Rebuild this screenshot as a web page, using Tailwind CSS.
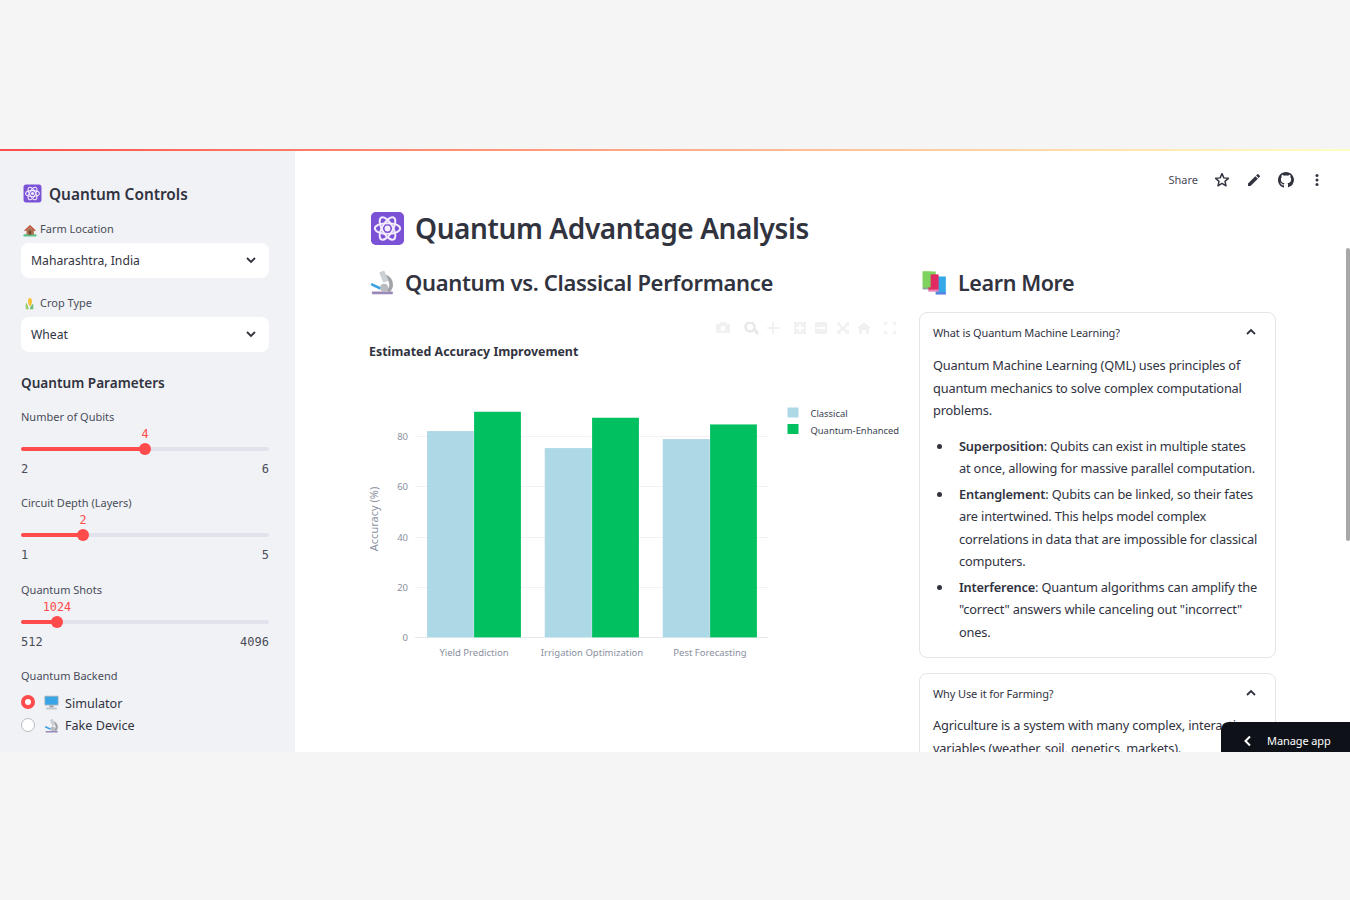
<!DOCTYPE html>
<html lang="en">
<head>
<meta charset="UTF-8">
<title>Quantum Advantage Analysis</title>
<script src="https://cdn.jsdelivr.net/npm/@tailwindcss/browser@4"></script>
</head>
<body class="bg-[#f5f5f5] font-['Noto_Sans',sans-serif] text-[#31333f] overflow-hidden">
<svg class="absolute w-0 h-0">
  <symbol id="atom" viewBox="0 0 36 36">
    <rect x="1" y="1" width="34" height="34" rx="5" fill="#7b52d6"/>
    <g fill="none" stroke="#f3edff" stroke-width="2">
      <ellipse cx="18" cy="18" rx="13" ry="5.5"/>
      <ellipse cx="18" cy="18" rx="13" ry="5.5" transform="rotate(60 18 18)"/>
      <ellipse cx="18" cy="18" rx="13" ry="5.5" transform="rotate(120 18 18)"/>
    </g>
    <circle cx="18" cy="18" r="3" fill="#f3edff"/>
  </symbol>
  <symbol id="microscope" viewBox="0 0 36 36">
    <rect x="4" y="31" width="29" height="4" rx="1" fill="#9a88b8"/>
    <path d="M22 10a12 12 0 0 1 4 21" fill="none" stroke="#a0a3a8" stroke-width="5"/>
    <path d="M14 5l7-3 6 14-7 3z" fill="#ccd0d4"/>
    <path d="M3 21l13 6" stroke="#3aa2e6" stroke-width="3.500"/>
    <circle cx="21" cy="26" r="5.500" fill="#b8bbc0"/>
  </symbol>
  <symbol id="books" viewBox="0 0 36 36">
    <rect x="1" y="2" width="18" height="24" fill="#7ed35e"/>
    <rect x="1" y="24" width="18" height="3" fill="#8fa6a0"/>
    <rect x="19" y="9" width="14" height="24" fill="#35a8e8"/>
    <rect x="19" y="31" width="14" height="3" fill="#5b7fe0"/>
    <rect x="9" y="6" width="14" height="23" fill="#e22a62"/>
    <rect x="9" y="27" width="14" height="3" fill="#e884b6"/>
    <rect x="1" y="2" width="11" height="22" fill="#7ed35e"/>
  </symbol>
  <symbol id="house" viewBox="0 0 36 36">
    <rect x="1" y="29" width="34" height="6" rx="2" fill="#5cc48a"/>
    <rect x="9" y="16" width="19" height="14" fill="#a9714f"/>
    <path d="M3 19L18 5l15 14-2 2L18 10 5 21z" fill="#c2452f"/>
    <path d="M18 10L7 20h22z" fill="#a9714f"/>
    <rect x="15" y="20" width="6" height="10" fill="#6d4632"/>
  </symbol>
  <symbol id="corn" viewBox="0 0 36 36">
    <path d="M16 4c6-3 9 2 9 8s-2 12-5 14c-4-3-7-8-6-14 0-3 0-6 2-8z" fill="#f5c33b"/>
    <path d="M8 34c-1-9-1-14 1-18 3 4 6 10 7 18z" fill="#9ccb6b"/>
    <path d="M28 34c1-7 1-11-1-15-4 4-7 9-8 15z" fill="#6cbf7b"/>
  </symbol>
  <symbol id="desktop" viewBox="0 0 36 36">
    <rect x="1" y="2" width="34" height="23" rx="2" fill="#a9b4bb"/>
    <rect x="3" y="4" width="30" height="19" fill="#38a6e6"/>
    <rect x="13" y="25" width="10" height="5" fill="#9aa3ab"/>
    <rect x="5" y="30" width="26" height="5" rx="1" fill="#c3c8cd"/>
  </symbol>
</svg>

<div class="h-[149px]"></div>
<div class="relative flex h-[603px] overflow-hidden bg-white">
  <div class="absolute top-0 left-0 right-0 h-[1.500px] bg-gradient-to-r from-[#ff4b4b] to-[#ffffc2]"></div>

  <!-- sidebar -->
  <aside class="w-[295px] shrink-0 bg-[#f0f2f6] pl-[21px] pr-[26px] pt-[34px]">
    <h2 class="flex items-center h-[21px] pt-[2px] text-[15.400px] font-semibold whitespace-nowrap">
      <svg class="w-[19px] h-[19px] mt-[-3px] ml-[2px] mr-[7px]"><use href="#atom"/></svg>Quantum Controls
    </h2>
    <div class="mt-[16px] h-[17px] pt-[2px] flex items-center text-[11px] text-[#4a4c58] whitespace-nowrap">
      <svg class="w-[14px] h-[14px] ml-[2px] mr-[3px]"><use href="#house"/></svg>Farm Location
    </div>
    <div class="mt-[6px] h-[35px] bg-white rounded-lg pl-[10px] pr-[12px] flex items-center justify-between text-[12.200px]">
      <span class="pt-[2px]">Maharashtra, India</span>
      <svg class="w-[12px] h-[12px] -mt-[1px]" viewBox="0 0 12 12" fill="none" stroke="#31333f" stroke-width="1.800"><path d="M2 4l4 4 4-4"/></svg>
    </div>
    <div class="mt-[16px] h-[17px] pt-[2px] flex items-center text-[11px] text-[#4a4c58] whitespace-nowrap">
      <svg class="w-[13px] h-[13px] ml-[2px] mr-[4px]"><use href="#corn"/></svg>Crop Type
    </div>
    <div class="mt-[6px] h-[35px] bg-white rounded-lg pl-[10px] pr-[12px] flex items-center justify-between text-[12.200px]">
      <span class="pt-[2px]">Wheat</span>
      <svg class="w-[12px] h-[12px] -mt-[1px]" viewBox="0 0 12 12" fill="none" stroke="#31333f" stroke-width="1.800"><path d="M2 4l4 4 4-4"/></svg>
    </div>

    <h3 class="mt-[21px] h-[20px] flex items-center text-[13.600px] font-semibold">Quantum Parameters</h3>

    <div class="mt-[15px] h-[17px] pt-[2px] flex items-center text-[11px] text-[#4a4c58]">Number of Qubits</div>
    <div class="relative h-[40px] mt-[7px]">
      <span class="absolute top-[-5px] left-[50%] -translate-x-1/2 font-['DejaVu_Sans_Mono',monospace] text-[11.800px] leading-[15px] text-[#ff4b4b]">4</span>
      <div class="absolute top-[15px] left-0 right-0 h-[4px] rounded-full bg-[#e0e3eb]"></div>
      <div class="absolute top-[15px] left-0 h-[4px] w-[50%] rounded-l-full bg-[#ff4b4b]"></div>
      <div class="absolute top-[11px] left-[50%] -ml-[6px] w-[12px] h-[12px] rounded-full bg-[#ff4b4b]"></div>
      <div class="absolute top-[30px] left-0 right-0 flex justify-between font-['DejaVu_Sans_Mono',monospace] text-[12px] leading-[15px] text-[#4a4c58]"><span>2</span><span>6</span></div>
    </div>

    <div class="mt-[22px] h-[17px] pt-[2px] flex items-center text-[11px] text-[#4a4c58]">Circuit Depth (Layers)</div>
    <div class="relative h-[40px] mt-[7px]">
      <span class="absolute top-[-5px] left-[25%] -translate-x-1/2 font-['DejaVu_Sans_Mono',monospace] text-[11.800px] leading-[15px] text-[#ff4b4b]">2</span>
      <div class="absolute top-[15px] left-0 right-0 h-[4px] rounded-full bg-[#e0e3eb]"></div>
      <div class="absolute top-[15px] left-0 h-[4px] w-[25%] rounded-l-full bg-[#ff4b4b]"></div>
      <div class="absolute top-[11px] left-[25%] -ml-[6px] w-[12px] h-[12px] rounded-full bg-[#ff4b4b]"></div>
      <div class="absolute top-[30px] left-0 right-0 flex justify-between font-['DejaVu_Sans_Mono',monospace] text-[12px] leading-[15px] text-[#4a4c58]"><span>1</span><span>5</span></div>
    </div>

    <div class="mt-[23px] h-[17px] pt-[1px] flex items-center text-[11px] text-[#4a4c58]">Quantum Shots</div>
    <div class="relative h-[40px] mt-[7px]">
      <span class="absolute top-[-5px] left-[14.500%] -translate-x-1/2 font-['DejaVu_Sans_Mono',monospace] text-[11.800px] leading-[15px] text-[#ff4b4b]">1024</span>
      <div class="absolute top-[15px] left-0 right-0 h-[4px] rounded-full bg-[#e0e3eb]"></div>
      <div class="absolute top-[15px] left-0 h-[4px] w-[14.500%] rounded-l-full bg-[#ff4b4b]"></div>
      <div class="absolute top-[11px] left-[14.500%] -ml-[6px] w-[12px] h-[12px] rounded-full bg-[#ff4b4b]"></div>
      <div class="absolute top-[30px] left-0 right-0 flex justify-between font-['DejaVu_Sans_Mono',monospace] text-[12px] leading-[15px] text-[#4a4c58]"><span>512</span><span>4096</span></div>
    </div>

    <div class="mt-[22px] h-[17px] pt-[2px] flex items-center text-[11px] text-[#4a4c58]">Quantum Backend</div>
    <div class="mt-[7px] h-[23px] flex items-center text-[12.600px]">
      <span class="w-[14px] h-[14px] -mt-[1px] rounded-full bg-[#ff4b4b] flex items-center justify-center"><span class="w-[6px] h-[6px] rounded-full bg-white"></span></span>
      <svg class="w-[15px] h-[15px] ml-[9px] mr-[6px]"><use href="#desktop"/></svg><span class="pt-[3px]">Simulator</span>
    </div>
    <div class="h-[22px] flex items-center text-[12.600px]">
      <span class="w-[14px] h-[14px] rounded-full bg-white border border-[#b9bbc2]"></span>
      <svg class="w-[15px] h-[15px] ml-[9px] mr-[6px]"><use href="#microscope"/></svg><span class="pt-[2px]">Fake Device</span>
    </div>
  </aside>

  <!-- main -->
  <main class="relative flex-1 pl-[74px] pr-[74px] pt-[60px]">
    <div class="absolute top-[21px] right-[25px] flex items-center h-[20px] text-[11px] text-[#4a4c58]">
      <span class="mr-[16px]">Share</span>
      <svg class="w-[16px] h-[16px] mr-[16px]" viewBox="0 0 24 24" fill="none" stroke="#31333f" stroke-width="2.200" stroke-linejoin="round"><path d="M12 2.500l2.800 6.300 6.700.7-5 4.500 1.500 6.700-6-3.500-6 3.500 1.500-6.700-5-4.500 6.700-.7z"/></svg>
      <svg class="w-[16px] h-[16px] mr-[16px]" viewBox="0 0 24 24" fill="#31333f"><path d="M3 17.250V21h3.750L17.810 9.940l-3.750-3.750L3 17.250zM20.710 7.040a1 1 0 0 0 0-1.410l-2.340-2.340a1 1 0 0 0-1.410 0l-1.830 1.830 3.750 3.750 1.830-1.830z"/></svg>
      <svg class="w-[16px] h-[16px] mr-[15px]" viewBox="0 0 16 16" fill="#31333f"><path d="M8 0C3.580 0 0 3.580 0 8c0 3.540 2.290 6.530 5.470 7.590.4.070.55-.17.55-.38v-1.900C4 13.700 3.480 12.800 3.320 12.350c-.09-.23-.48-.94-.82-1.130-.28-.15-.68-.52-.01-.53.63-.01 1.080.58 1.230.82.720 1.210 1.870.870 2.330.66.070-.52.280-.870.510-1.070-1.780-.2-3.640-.89-3.640-3.950 0-.87.310-1.590.820-2.150-.08-.2-.36-1.020.08-2.120 0 0 .67-.21 2.200.820.640-.18 1.320-.27 2-.27s1.360.09 2 .27c1.530-1.040 2.200-.82 2.200-.82.440 1.100.16 1.920.08 2.120.51.560.82 1.270.82 2.150 0 3.070-1.870 3.750-3.650 3.950.29.250.54.730.54 1.480v2.200c0 .21.150.46.550.38A8.010 8.010 0 0 0 16 8c0-4.420-3.580-8-8-8z"/></svg>
      <svg class="w-[16px] h-[16px]" viewBox="0 0 16 16" fill="#31333f"><circle cx="8" cy="3.500" r="1.500"/><circle cx="8" cy="8" r="1.500"/><circle cx="8" cy="12.500" r="1.500"/></svg>
    </div>

    <h1 class="flex items-center h-[38px] text-[28px] tracking-[-0.4px] font-semibold whitespace-nowrap">
      <svg class="w-[35px] h-[35px] ml-[1px] mr-[10px]"><use href="#atom"/></svg>Quantum Advantage Analysis
    </h1>

    <div class="grid grid-cols-[536px_357px] gap-[14px] mt-[19px]">
      <section>
        <h2 class="flex items-center h-[32px] text-[22px] tracking-[-0.33px] font-semibold whitespace-nowrap">
          <svg class="w-[26px] h-[26px] mr-[10px]"><use href="#microscope"/></svg>Quantum vs. Classical Performance
        </h2>
        <svg class="block mt-[24px]" width="536" height="360" viewBox="369 322 536 360" font-family="Noto Sans, sans-serif">
          <text x="369" y="356" font-size="12.400" font-weight="700" fill="#31333f">Estimated Accuracy Improvement</text>
          <g fill="#f1f1f1">
            <path d="M716 324h3l1-2h6l1 2h3v9h-14z"/>
            <circle cx="723" cy="328.500" r="2.500" fill="#ffffff"/>
            <circle cx="750" cy="327" r="4.500" fill="none" stroke="#e8e8e8" stroke-width="2.500"/>
            <path d="M753 330l2-2 4 5-2 2z" fill="#e8e8e8"/>
            <path d="M772 322h2v5h5v2h-5v5h-2v-5h-5v-2h5z"/>
            <path d="M794 322h12v12h-12zm5 2v3h-3v2h3v3h2v-3h3v-2h-3v-3z" fill-rule="evenodd"/>
            <path d="M815 322h12v12h-12zm2 5v2h8v-2z" fill-rule="evenodd"/>
            <path d="M837 322l4 1-1 1 3 3 3-3-1-1 4-1v4l-1-1-3 3 3 3 1-1v4h-4l1-1-3-3-3 3 1 1h-4v-4l1 1 3-3-3-3-1 1z"/>
            <path d="M864 322l7 6h-2v6h-3v-4h-4v4h-3v-6h-2z"/>
            <path d="M884 322h4v1.500h-2.500v2.500H884zM892 322h4v4h-1.500v-2.500H892zM884 330h1.500v2.500H888v1.500h-4zM894.500 330h1.500v4h-4v-1.500h2.500z"/>
          </g>
          <g stroke="#f0f2f6" stroke-width="1">
            <line x1="415" x2="768" y1="436.500" y2="436.500"/>
            <line x1="415" x2="768" y1="486.500" y2="486.500"/>
            <line x1="415" x2="768" y1="537.500" y2="537.500"/>
            <line x1="415" x2="768" y1="587.500" y2="587.500"/>
            <line x1="415" x2="768" y1="637.500" y2="637.500" stroke="#e6e8ee"/>
          </g>
          <g stroke="#ffffff" stroke-opacity="0.400" stroke-width="0.500">
            <rect x="427" y="431" width="47" height="206.500" fill="#add8e6"/>
            <rect x="474" y="411.700" width="47" height="225.800" fill="#00c060"/>
            <rect x="544.700" y="448" width="47.300" height="189.500" fill="#add8e6"/>
            <rect x="592" y="417.700" width="47" height="219.800" fill="#00c060"/>
            <rect x="662.700" y="439" width="47.300" height="198.500" fill="#add8e6"/>
            <rect x="710" y="424.300" width="47" height="213.200" fill="#00c060"/>
          </g>
          <g font-size="9.500" fill="#8a90a0" text-anchor="end">
            <text x="408" y="440">80</text>
            <text x="408" y="490">60</text>
            <text x="408" y="541">40</text>
            <text x="408" y="591">20</text>
            <text x="408" y="641">0</text>
          </g>
          <g font-size="9.500" fill="#8a90a0" text-anchor="middle">
            <text x="474" y="656">Yield Prediction</text>
            <text x="592" y="656">Irrigation Optimization</text>
            <text x="710" y="656">Pest Forecasting</text>
          </g>
          <text transform="translate(378 519) rotate(-90)" font-size="11" fill="#8a90a0" text-anchor="middle">Accuracy (%)</text>
          <rect x="787.500" y="407.500" width="11" height="10" fill="#add8e6"/>
          <rect x="787.500" y="424" width="11" height="10" fill="#00c060"/>
          <g font-size="9.400" fill="#3b3f52">
            <text x="810.500" y="416.500">Classical</text>
            <text x="810.500" y="433.500">Quantum-Enhanced</text>
          </g>
        </svg>
      </section>

      <section>
        <h2 class="flex items-center h-[32px] pt-[2px] text-[21.500px] tracking-[-0.4px] font-semibold whitespace-nowrap">
          <svg class="w-[26px] h-[26px] ml-[3px] mr-[10px]"><use href="#books"/></svg>Learn More
        </h2>
        <div class="mt-[14px] h-[346px] border border-[#e4e5e9] rounded-lg px-[13px]">
          <div class="flex items-center justify-between h-[40px] text-[11px] tracking-[-0.12px] pr-[5px]">
            <span>What is Quantum Machine Learning?</span>
            <svg class="w-[12px] h-[12px] -mt-[2px]" viewBox="0 0 12 12" fill="none" stroke="#31333f" stroke-width="1.800"><path d="M2 8l4-4 4 4"/></svg>
          </div>
          <div class="text-[12.800px] tracking-[-0.18px] leading-[22.500px] whitespace-nowrap">
            <p class="mt-[1px]">Quantum Machine Learning (QML) uses principles of<br>quantum mechanics to solve complex computational<br>problems.</p>
            <ul class="mt-[13px] space-y-[3px]">
              <li class="flex"><span class="w-[26px] shrink-0 pt-[9px] pl-[4px]"><span class="block w-[5px] h-[5px] rounded-full bg-[#31333f]"></span></span><div><b class="font-semibold">Superposition</b>: Qubits can exist in multiple states<br>at once, allowing for massive parallel computation.</div></li>
              <li class="flex"><span class="w-[26px] shrink-0 pt-[9px] pl-[4px]"><span class="block w-[5px] h-[5px] rounded-full bg-[#31333f]"></span></span><div><b class="font-semibold">Entanglement</b>: Qubits can be linked, so their fates<br>are intertwined. This helps model complex<br>correlations in data that are impossible for classical<br>computers.</div></li>
              <li class="flex"><span class="w-[26px] shrink-0 pt-[9px] pl-[4px]"><span class="block w-[5px] h-[5px] rounded-full bg-[#31333f]"></span></span><div><b class="font-semibold">Interference</b>: Quantum algorithms can amplify the<br>"correct" answers while canceling out "incorrect"<br>ones.</div></li>
            </ul>
          </div>
        </div>
        <div class="mt-[15px] h-[120px] border border-[#e4e5e9] rounded-lg px-[13px]">
          <div class="flex items-center justify-between h-[40px] text-[11px] tracking-[-0.12px] pr-[5px]">
            <span>Why Use it for Farming?</span>
            <svg class="w-[12px] h-[12px] -mt-[2px]" viewBox="0 0 12 12" fill="none" stroke="#31333f" stroke-width="1.800"><path d="M2 8l4-4 4 4"/></svg>
          </div>
          <p class="text-[12.800px] tracking-[-0.18px] leading-[22.500px] whitespace-nowrap">Agriculture is a system with many complex, interacting<br>variables (weather, soil, genetics, markets).</p>
        </div>
      </section>
    </div>

    <div class="absolute top-[99px] right-0 w-[4px] h-[293px] bg-[#a8a8a8] rounded-full"></div>
  </main>

  <div class="absolute right-0 bottom-0 w-[129px] h-[30px] bg-[#0e1117] rounded-tl-lg flex items-center text-white text-[11px] tracking-[-0.1px] pl-[22px] pt-[8px]">
    <svg class="w-[10px] h-[12px] mr-[14px]" viewBox="0 0 10 12" fill="none" stroke="#ffffff" stroke-width="2"><path d="M7 1.500L2.500 6 7 10.500"/></svg>Manage app
  </div>
</div>
</body>
</html>
